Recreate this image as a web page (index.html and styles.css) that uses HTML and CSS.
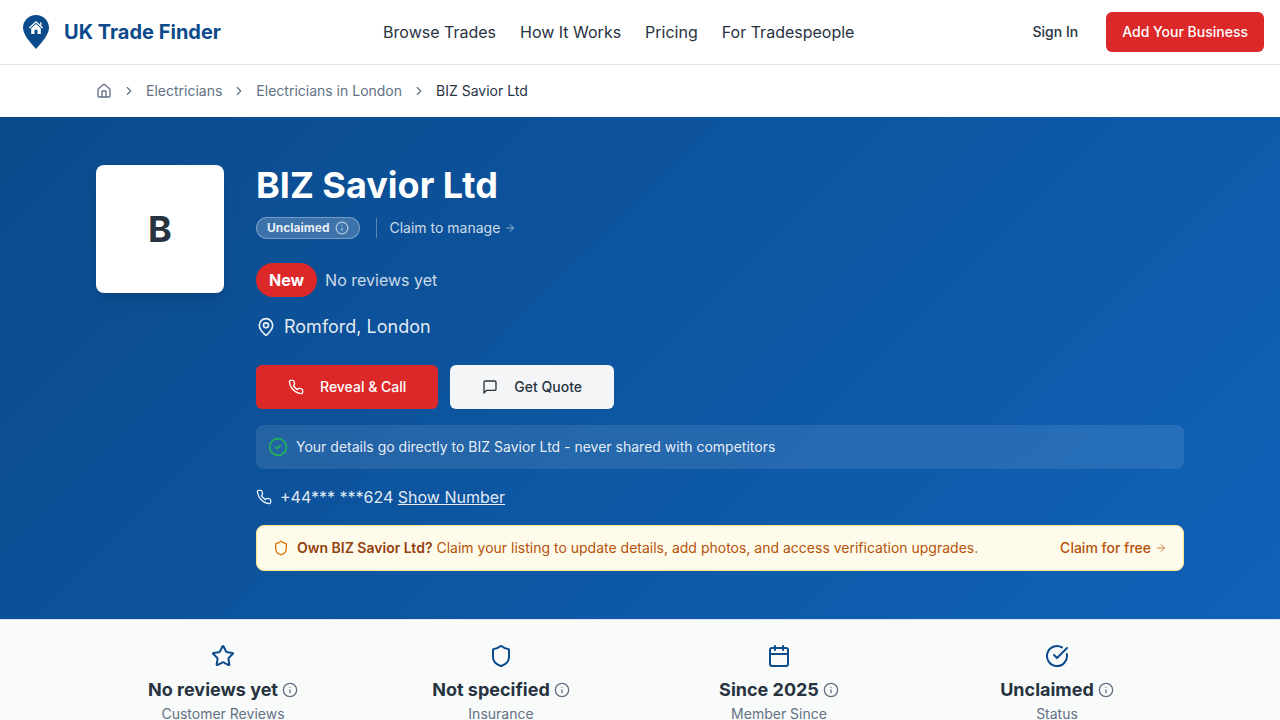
FILE: index.html
```html
<!DOCTYPE html>
<html lang="en">
<head>
<meta charset="utf-8">
<meta name="viewport" content="width=device-width, initial-scale=1">
<title>BIZ Savior Ltd | UK Trade Finder</title>
<link rel="stylesheet" href="styles.css">
</head>
<body>
<svg class="sprite" aria-hidden="true">
  <symbol id="chevron" viewBox="0 0 24 24"><path d="m9 18 6-6-6-6"/></symbol>
  <symbol id="info" viewBox="0 0 24 24"><circle cx="12" cy="12" r="10"/><path d="M12 16v-4M12 8h.01"/></symbol>
  <symbol id="arrow" viewBox="0 0 24 24"><path d="M5 12h14M12 5l7 7-7 7"/></symbol>
  <symbol id="shield" viewBox="0 0 24 24"><path d="M20 13c0 5-3.500 7.500-7.660 8.950a1 1 0 0 1-.67-.01C7.500 20.500 4 18 4 13V6a1 1 0 0 1 1-1c2 0 4.500-1.200 6.240-2.720a1.170 1.170 0 0 1 1.520 0C14.510 3.810 17 5 19 5a1 1 0 0 1 1 1z"/></symbol>
  <symbol id="phone" viewBox="0 0 24 24"><path d="M22 16.920v3a2 2 0 0 1-2.180 2 19.790 19.790 0 0 1-8.630-3.070 19.500 19.500 0 0 1-6-6 19.790 19.790 0 0 1-3.070-8.670A2 2 0 0 1 4.110 2h3a2 2 0 0 1 2 1.720 12.840 12.840 0 0 0 .7 2.810 2 2 0 0 1-.45 2.110L8.090 9.910a16 16 0 0 0 6 6l1.270-1.270a2 2 0 0 1 2.110-.45 12.840 12.840 0 0 0 2.810.7A2 2 0 0 1 22 16.920z"/></symbol>
</svg>

<header class="topbar">
  <a class="brand" href="#">
    <svg class="brand-mark" viewBox="0 0 40 40" aria-hidden="true">
      <path class="pin" d="M20 3C12.800 3 7 8.700 7 15.800c0 3.500 1.700 6.800 3.800 9.900 2.700 4 6.500 8.300 9.200 11.300 2.700-3 6.500-7.300 9.200-11.300 2.100-3.100 3.800-6.400 3.800-9.900C33 8.700 27.200 3 20 3z"/>
      <path class="roof" d="M13.300 15.900 20 9.800l6.700 6.100M24.800 10.200v3"/>
      <path class="house" d="M15.200 16.300 20 12l4.800 4.300v5.700h-3.300v-4.300h-3V22h-3.300z"/>
    </svg>
    <span>UK Trade Finder</span>
  </a>
  <nav class="main-nav" aria-label="Main">
    <a href="#">Browse Trades</a>
    <a href="#">How It Works</a>
    <a href="#">Pricing</a>
    <a href="#">For Tradespeople</a>
  </nav>
  <div class="actions">
    <button class="btn btn-ghost" type="button">Sign In</button>
    <button class="btn btn-primary" type="button">Add Your Business</button>
  </div>
</header>

<nav class="container" aria-label="Breadcrumb">
  <ol class="crumbs">
    <li><a href="#" aria-label="Home"><svg class="icon i16" viewBox="0 0 24 24"><path d="M15 21v-8a1 1 0 0 0-1-1h-4a1 1 0 0 0-1 1v8"/><path d="M3 10a2 2 0 0 1 .71-1.530l7-6a2 2 0 0 1 2.580 0l7 6A2 2 0 0 1 21 10v9a2 2 0 0 1-2 2H5a2 2 0 0 1-2-2z"/></svg></a></li>
    <li aria-hidden="true"><svg class="icon i14"><use href="#chevron"/></svg></li>
    <li><a href="#">Electricians</a></li>
    <li aria-hidden="true"><svg class="icon i14"><use href="#chevron"/></svg></li>
    <li><a href="#">Electricians in London</a></li>
    <li aria-hidden="true"><svg class="icon i14"><use href="#chevron"/></svg></li>
    <li class="current" aria-current="page">BIZ Savior Ltd</li>
  </ol>
</nav>

<main>
  <section class="hero">
    <div class="container hero-inner">
      <div class="avatar">B</div>
      <div class="details">
        <h1>BIZ Savior Ltd</h1>
        <div class="status-row">
          <span class="badge">Unclaimed <svg class="icon i14 soft"><use href="#info"/></svg></span>
          <a class="claim-link" href="#">Claim to manage <svg class="icon i12 soft"><use href="#arrow"/></svg></a>
        </div>
        <div class="rating">
          <span class="new-pill">New</span>
          <span>No reviews yet</span>
        </div>
        <div class="location">
          <svg class="icon i20" viewBox="0 0 24 24"><path d="M20 10c0 4.990-5.540 10.190-7.400 11.800a1 1 0 0 1-1.200 0C9.540 20.190 4 14.990 4 10a8 8 0 0 1 16 0"/><circle cx="12" cy="10" r="3"/></svg>
          <span>Romford, London</span>
        </div>
        <div class="cta">
          <button class="btn btn-lg btn-primary" type="button"><svg class="icon i16"><use href="#phone"/></svg>Reveal &amp; Call</button>
          <button class="btn btn-lg btn-light" type="button"><svg class="icon i16" viewBox="0 0 24 24"><path d="M21 15a2 2 0 0 1-2 2H7l-4 4V5a2 2 0 0 1 2-2h14a2 2 0 0 1 2 2z"/></svg>Get Quote</button>
        </div>
        <p class="trust">
          <svg class="icon i20 green" viewBox="0 0 24 24"><circle cx="12" cy="12" r="10"/><path d="m9 12 2 2 4-4"/></svg>
          <span>Your details go directly to BIZ Savior Ltd - never shared with competitors</span>
        </p>
        <div class="phone">
          <svg class="icon i16"><use href="#phone"/></svg>
          <span>+44*** ***624 <button class="show-number" type="button">Show Number</button></span>
        </div>
        <aside class="owner">
          <svg class="icon i16 amber"><use href="#shield"/></svg>
          <p><strong>Own BIZ Savior Ltd?</strong> Claim your listing to update details, add photos, and access verification upgrades.</p>
          <a href="#">Claim for free <svg class="icon i12 soft"><use href="#arrow"/></svg></a>
        </aside>
      </div>
    </div>
  </section>

  <section class="stats">
    <div class="container stats-grid">
      <div class="stat">
        <svg class="icon i24" viewBox="0 0 24 24"><path d="M11.530 2.300a.53.53 0 0 1 .95 0l2.310 4.680a2.120 2.120 0 0 0 1.590 1.160l5.170.75a.53.53 0 0 1 .29.91l-3.740 3.640a2.120 2.120 0 0 0-.61 1.880l.88 5.140a.53.53 0 0 1-.77.56l-4.620-2.430a2.120 2.120 0 0 0-1.970 0L6.400 21.020a.53.53 0 0 1-.77-.56l.88-5.140a2.120 2.120 0 0 0-.61-1.880L2.160 9.800a.53.53 0 0 1 .29-.91l5.170-.75a2.120 2.120 0 0 0 1.600-1.160z"/></svg>
        <h2>No reviews yet <svg class="icon i16"><use href="#info"/></svg></h2>
        <p>Customer Reviews</p>
      </div>
      <div class="stat">
        <svg class="icon i24"><use href="#shield"/></svg>
        <h2>Not specified <svg class="icon i16"><use href="#info"/></svg></h2>
        <p>Insurance</p>
      </div>
      <div class="stat">
        <svg class="icon i24" viewBox="0 0 24 24"><path d="M8 2v4M16 2v4M3 10h18"/><rect x="3" y="4" width="18" height="18" rx="2"/></svg>
        <h2>Since 2025 <svg class="icon i16"><use href="#info"/></svg></h2>
        <p>Member Since</p>
      </div>
      <div class="stat">
        <svg class="icon i24" viewBox="0 0 24 24"><path d="M21.800 10A10 10 0 1 1 17 3.340"/><path d="m9 11 3 3L22 4"/></svg>
        <h2>Unclaimed <svg class="icon i16"><use href="#info"/></svg></h2>
        <p>Status</p>
      </div>
    </div>
  </section>
</main>
</body>
</html>
```

FILE: styles.css
```css
* { box-sizing: border-box; }

html { overflow-x: hidden; scrollbar-width: none; }

body {
  margin: 0;
  background: #fff;
  color: #27333f;
  font-family: Inter, "Liberation Sans", sans-serif;
  font-size: 16px;
  line-height: 24px;
}

h1, h2, p, ol { margin: 0; padding: 0; }
a { color: inherit; text-decoration: none; }
button { font: inherit; color: inherit; border: 0; background: none; padding: 0; cursor: pointer; }

.sprite { display: none; }

.icon {
  flex: none;
  display: block;
  fill: none;
  stroke: currentColor;
  stroke-width: 2;
  stroke-linecap: round;
  stroke-linejoin: round;
}
.i12 { width: 12px; height: 12px; }
.i14 { width: 14px; height: 14px; }
.i16 { width: 16px; height: 16px; }
.i20 { width: 20px; height: 20px; }
.i24 { width: 24px; height: 24px; }
.soft { opacity: 0.7; }

.container {
  max-width: 1152px;
  margin: 0 auto;
  padding: 0 32px;
}

/* Header */
.topbar {
  display: flex;
  align-items: center;
  justify-content: space-between;
  padding: 12px 16px;
  border-bottom: 1px solid #dde4ee;
}
.brand {
  display: flex;
  align-items: center;
  gap: 8px;
  color: #0b4a8b;
  font-size: 20px;
  font-weight: 700;
  line-height: 28px;
}
.brand-mark { width: 40px; height: 40px; }
.pin { fill: #0b4a8b; }
.house { fill: #fff; }
.roof { fill: none; stroke: #fff; stroke-width: 1.300; }
.main-nav { display: flex; gap: 24px; }
.actions { display: flex; gap: 12px; }

.btn {
  display: inline-flex;
  align-items: center;
  justify-content: center;
  padding: 10px 16px;
  border-radius: 6px;
  color: #27333f;
  font-size: 14px;
  font-weight: 500;
  line-height: 20px;
}
.btn-primary { background: #dc2828; color: #fff; }
.btn-light { background: #f3f5f7; }
.btn-lg { gap: 16px; padding: 12px 32px; }

/* Breadcrumb */
.crumbs {
  display: flex;
  align-items: center;
  gap: 10px;
  padding: 16px 0;
  list-style: none;
  color: #627184;
  font-size: 14px;
  line-height: 20px;
}
.current { color: #27333f; }

/* Hero */
.hero {
  padding: 48px 0;
  background: linear-gradient(135deg, #0b4a8b, #0f62b8);
  color: #fff;
}
.hero-inner { display: flex; align-items: flex-start; gap: 32px; }
.avatar {
  flex: none;
  display: grid;
  place-items: center;
  width: 128px;
  height: 128px;
  border-radius: 8px;
  background: #fff;
  color: #27333f;
  font-size: 36px;
  font-weight: 700;
  line-height: 40px;
  box-shadow: 0 10px 15px -3px rgb(0 0 0 / 0.1), 0 4px 6px -4px rgb(0 0 0 / 0.1);
}
.details { flex: 1; min-width: 0; }
h1 { font-size: 36px; font-weight: 700; line-height: 40px; }

.status-row { display: flex; align-items: center; gap: 16px; margin-top: 12px; }
.badge {
  display: flex;
  align-items: center;
  gap: 6px;
  padding: 2px 10px;
  border: 1px solid rgb(255 255 255 / 0.3);
  border-radius: 11px;
  background: rgb(255 255 255 / 0.2);
  color: rgb(255 255 255 / 0.9);
  font-size: 12px;
  font-weight: 700;
  line-height: 16px;
}
.claim-link {
  display: flex;
  align-items: center;
  gap: 4px;
  padding-left: 12px;
  border-left: 1px solid rgb(255 255 255 / 0.3);
  color: rgb(255 255 255 / 0.8);
  font-size: 14px;
  line-height: 20px;
}
.rating {
  display: flex;
  align-items: center;
  gap: 8px;
  margin-top: 24px;
  color: rgb(255 255 255 / 0.8);
}
.new-pill {
  padding: 5px 13px;
  border-radius: 17px;
  background: #dc2828;
  color: #fff;
  font-weight: 700;
}
.location {
  display: flex;
  align-items: center;
  gap: 8px;
  margin-top: 16px;
  color: rgb(255 255 255 / 0.9);
  font-size: 18px;
  line-height: 28px;
}
.cta { display: flex; flex-wrap: wrap; gap: 12px; margin-top: 24px; }
.trust {
  display: flex;
  align-items: center;
  gap: 8px;
  margin-top: 16px;
  padding: 12px;
  border-radius: 8px;
  background: rgb(255 255 255 / 0.1);
  color: rgb(255 255 255 / 0.9);
  font-size: 14px;
  line-height: 20px;
}
.green { color: #22b357; }
.phone {
  display: flex;
  align-items: center;
  gap: 8px;
  margin-top: 16px;
  color: rgb(255 255 255 / 0.9);
}
.show-number { text-decoration: underline; }
.owner {
  display: flex;
  align-items: center;
  gap: 8px;
  margin-top: 16px;
  padding: 12px 16px;
  border: 1px solid #fde68a;
  border-radius: 8px;
  background: #fffbeb;
  color: #b45309;
  font-size: 14px;
  line-height: 20px;
}
.owner p { flex: 1; }
.owner strong { color: #92400e; font-weight: 600; }
.owner a { display: flex; align-items: center; gap: 4px; font-weight: 500; }
.amber { color: #d97706; }

/* Key facts */
.stats {
  padding: 24px 0;
  border-top: 1px solid #dde4ee;
  background: #f9fbfb;
}
.stats-grid { display: grid; grid-template-columns: repeat(4, 1fr); gap: 24px; }
.stat {
  display: flex;
  flex-direction: column;
  align-items: center;
  text-align: center;
  color: #627184;
  font-size: 14px;
  line-height: 20px;
}
.stat > .icon { margin-bottom: 8px; color: #0b4a8b; }
.stat h2 {
  display: flex;
  align-items: center;
  gap: 4px;
  color: #27333f;
  font-size: 18px;
  font-weight: 700;
  line-height: 28px;
}
.stat h2 .icon { color: #627184; }
```
